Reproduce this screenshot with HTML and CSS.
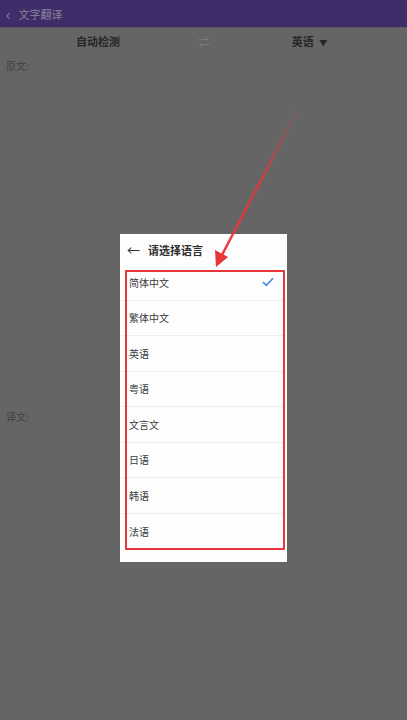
FILE: index.html
```html
<!DOCTYPE html>
<html lang="zh">
<head>
    <meta charset="UTF-8">
    <meta name="viewport" content="width=device-width, initial-scale=1.0">
    <title>文字翻译</title>
    <link rel="stylesheet" href="styles.css">
</head>
<body>

    <!-- Top bar -->
    <div class="topbar">
        <span class="back">&lsaquo;</span>
        <span class="title">文字翻译</span>
    </div>

    <!-- Language switch -->
    <div class="lang-bar">
        <div class="lang-from">自动检测</div>
        <div class="swap">&#8652;</div>
        <div class="lang-to">英语 <span class="caret">&#9660;</span></div>
    </div>

    <div class="section source">
        <div class="label">原文:</div>
    </div>
    <div class="section target">
        <div class="label">译文:</div>
    </div>

    <!-- Language picker dialog -->
    <div class="dialog">
        <div class="dialog-head">
            <span class="dialog-back">&larr;</span>
            <span class="dialog-title">请选择语言</span>
        </div>
        <div class="lang-list">
            <div class="lang-inner">
                <div class="lang-row">简体中文
                    <svg class="check" width="12" height="10" viewBox="0 0 12 10"><path d="M1 5.2 L4.3 8.3 L11 1.3" fill="none" stroke="#3d8fe6" stroke-width="1.6"/></svg>
                </div>
                <div class="lang-row">繁体中文</div>
                <div class="lang-row">英语</div>
                <div class="lang-row">粤语</div>
                <div class="lang-row">文言文</div>
                <div class="lang-row">日语</div>
                <div class="lang-row">韩语</div>
                <div class="lang-row">法语</div>
            </div>
        </div>
        <div class="highlight"></div>
    </div>

    <!-- Annotation arrow -->
    <svg class="annotation" width="407" height="720" viewBox="0 0 407 720">
        <defs>
            <linearGradient id="fade" x1="295" y1="115" x2="216" y2="266" gradientUnits="userSpaceOnUse">
                <stop offset="0" stop-color="#e8353a" stop-opacity="0.1"/>
                <stop offset="0.45" stop-color="#e8353a" stop-opacity="0.8"/>
                <stop offset="1" stop-color="#e8353a" stop-opacity="1"/>
            </linearGradient>
        </defs>
        <line x1="296" y1="113" x2="222" y2="255" stroke="url(#fade)" stroke-width="2.6" stroke-linecap="round"/>
        <polygon points="216,267 215,250 228,257" fill="#e8353a"/>
    </svg>

</body>
</html>
```

FILE: styles.css
```css
body {
    margin: 0;
    width: 407px;
    height: 720px;
    background: #666566;
    font-family: "Noto Sans CJK SC", "Noto Sans", sans-serif;
    position: relative;
    overflow: hidden;
}

.topbar {
    height: 28px;
    background: #3f2d6a;
    display: flex;
    align-items: center;
    padding-left: 6px;
    color: #8b8299;
    font-size: 11px;
    border-bottom: 1px solid #5c5560;
    box-sizing: border-box;
}

.back {
    font-size: 15px;
    margin-right: 8px;
    line-height: 1;
}

.lang-bar {
    height: 26px;
    display: flex;
    align-items: center;
    font-size: 11px;
    color: #262626;
    font-weight: bold;
}

.lang-from {
    width: 196px;
    text-align: center;
}

.swap {
    width: 16px;
    text-align: center;
    color: #7f7e80;
    font-weight: normal;
    font-size: 12px;
}

.lang-to {
    width: 195px;
    text-align: center;
}

.caret {
    font-size: 8px;
    margin-left: 3px;
}

.section {
    padding: 4px 6px;
}

.source {
    height: 343px;
}

.label {
    font-size: 10px;
    color: #3f3f40;
}

/* Dialog */
.dialog {
    position: absolute;
    left: 120px;
    top: 234px;
    width: 167px;
    height: 328px;
    background: #fdfdfd;
}

.dialog-head {
    height: 31px;
    display: flex;
    align-items: center;
    padding-left: 7px;
    color: #2e2e2e;
    padding-bottom: 5px;
}

.dialog-back {
    font-size: 13px;
    margin-right: 8px;
}

.dialog-title {
    font-size: 11px;
    font-weight: bold;
}

.lang-list {
    height: 280px;
    overflow: hidden;
}

.lang-inner {
    margin-top: -5px;
}

.lang-row {
    height: 35.5px;
    display: flex;
    align-items: center;
    justify-content: space-between;
    padding: 0 9px 0 9px;
    font-size: 10px;
    color: #3c3c3c;
    border-bottom: 1px solid #ededed;
    box-sizing: border-box;
    margin-right: 4px;
}

.lang-row:last-child {
    border-bottom: none;
}

.check {
    margin-right: 0;
}

.highlight {
    position: absolute;
    left: 5px;
    top: 36px;
    width: 156px;
    height: 276px;
    border: 2px solid #e8353a;
    border-radius: 1px;
}

.annotation {
    position: absolute;
    left: 0;
    top: 0;
}
```
